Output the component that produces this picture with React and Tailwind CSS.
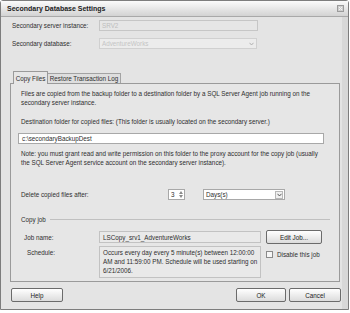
import React from "react";

function Chevron() {
  return (
    <svg width="5" height="4" viewBox="0 0 5 4">
      <path d="M0.5 0.8 L2.5 3 L4.5 0.8" fill="none" stroke="#4a4a4a" strokeWidth="0.9" />
    </svg>
  );
}

function Button({ children, className = "" }) {
  return (
    <div
      className={`h-[14px] flex items-center justify-center rounded-[2px] border border-[#6b6b6b] bg-gradient-to-b from-white to-[#dcdcdc] text-[#222] ${className}`}
    >
      {children}
    </div>
  );
}

export default function App() {
  return (
    <div className="w-[350px] h-[313px] bg-white font-['Liberation_Sans',Arial,sans-serif] text-[6.3px] text-[#2e2e2e] leading-[9px]">
      <div className="w-[349px] h-[310px] border border-[#7d7d7d] rounded-t-[3px] bg-[#e4e4e4] flex flex-col">
        {/* title bar */}
        <div className="h-[16px] flex items-center justify-between pl-[6px] pr-[4px] bg-gradient-to-b from-[#fbfbfb] to-[#d3d3d3] border-b border-[#a9a9a9]">
          <span className="font-bold text-[7px] text-[#1c1c1c]">Secondary Database Settings</span>
          <div className="w-[7px] h-[7px] border border-[#9b9b9b] bg-[#cfcfcf] flex items-center justify-center">
            <svg width="5" height="5" viewBox="0 0 5 5">
              <path d="M1 1 L4 4 M4 1 L1 4" stroke="#f4f4f4" strokeWidth="1" />
            </svg>
          </div>
        </div>

        <div className="flex-1 flex border-r-[6px] border-r-[#d8d8d8]">
          <div className="flex-1 flex flex-col pl-[9px] pr-[2px]">
            {/* server instance */}
            <div className="flex items-center mt-[3px] h-[11px]">
              <span className="w-[89px] pl-[2px]">Secondary server instance:</span>
              <div className="w-[159px] h-[11px] border border-[#c6c6c6] bg-[#e6e6e6] pl-[2px] flex items-center text-[#bdbdbd]">
                SRV2
              </div>
            </div>
            <div className="flex items-center mt-[7px] h-[11px]">
              <span className="w-[89px] pl-[2px]">Secondary database:</span>
              <div className="w-[158px] h-[11px] border border-[#d0d0d0] bg-[#ececec] pl-[2px] flex items-center justify-between text-[#c4c4c4]">
                AdventureWorks
                <div className="w-[9px] h-[9px] flex items-center justify-center opacity-40">
                  <Chevron />
                </div>
              </div>
            </div>

            {/* tabs */}
            <div className="flex items-end mt-[21px] pl-[3px] h-[13px]">
              <div className="h-[13px] w-[35px] flex items-center justify-center border border-b-0 border-[#9a9a9a] bg-[#e6e6e6] rounded-t-[1px] relative top-[1px]">
                Copy Files
              </div>
              <div className="h-[10px] w-[73px] flex items-center justify-center border border-b-0 border-l-0 border-[#a3a3a3] bg-[#dedede]">
                Restore Transaction Log
              </div>
            </div>

            {/* panel */}
            <div className="w-[330px] h-[199px] border border-[#9a9a9a] bg-[#e6e6e6] flex flex-col pl-[10px] pr-[15px] pt-[5px]">
              <p>
                Files are copied from the backup folder to a destination folder by a SQL Server Agent job running on the
                secondary server instance.
              </p>
              <p className="mt-[10px]">
                Destination folder for copied files: (This folder is usually located on the secondary server.)
              </p>
              <div className="mt-[7px] -ml-[3px] w-[306px] h-[11px] border border-[#a8a8a8] bg-white pl-[3px] flex items-center">
                c:\secondaryBackupDest
              </div>
              <p className="mt-[6px] leading-[8.5px]">
                Note: you must grant read and write permission on this folder to the proxy account for the copy job (usually the
                SQL Server Agent service account on the secondary server instance).
              </p>

              <div className="flex items-center mt-[22px] h-[11px]">
                <span className="w-[147px]">Delete copied files after:</span>
                <div className="w-[17px] h-[11px] border border-[#a8a8a8] bg-white flex items-center justify-between pl-[2px] pr-[1px]">
                  3
                  <div className="flex flex-col gap-[1px]">
                    <svg width="4" height="3" viewBox="0 0 4 3"><path d="M0 3 L2 0 L4 3 Z" fill="#8a8a8a" /></svg>
                    <svg width="4" height="3" viewBox="0 0 4 3"><path d="M0 0 L2 3 L4 0 Z" fill="#8a8a8a" /></svg>
                  </div>
                </div>
                <div className="ml-[18px] w-[82px] h-[11px] border border-[#a8a8a8] bg-white flex items-center justify-between pl-[2px] pr-[1px]">
                  Days(s)
                  <div className="w-[8px] h-[8px] border border-[#b8b8b8] bg-[#f0f0f0] flex items-center justify-center">
                    <Chevron />
                  </div>
                </div>
              </div>

              {/* copy job group */}
              <div className="flex items-center mt-[15px] h-[9px]">
                <span>Copy job</span>
                <div className="flex-1 h-px bg-[#c0c0c0] ml-[4px] -mr-[6px]" />
              </div>

              <div className="flex items-center mt-[7px] h-[12px]">
                <span className="w-[78px] pl-[3px]">Job name:</span>
                <div className="w-[162px] h-[12px] border border-[#c2c2c2] bg-[#e9e9e9] pl-[3px] flex items-center">
                  LSCopy_srv1_AdventureWorks
                </div>
                <Button className="ml-[5px] w-[56px]">Edit Job...</Button>
              </div>

              <div className="flex mt-[3px]">
                <span className="w-[78px] pl-[6px] pt-[2px]">Schedule:</span>
                <div className="w-[162px] h-[32px] border border-[#c2c2c2] bg-[#e9e9e9] pl-[3px] pt-[1px] leading-[9px]">
                  Occurs every day every 5 minute(s) between 12:00:00 AM and 11:59:00 PM. Schedule will be used starting on
                  6/21/2006.
                </div>
                <div className="ml-[5px] flex items-start pt-[5px]">
                  <div className="w-[7px] h-[7px] border border-[#8a8a8a] bg-[#f6f6f6]" />
                  <span className="ml-[4px] -mt-[1px]">Disable this job</span>
                </div>
              </div>
            </div>

            {/* buttons */}
            <div className="flex items-center mt-[6px] pl-[1px] w-[331px]">
              <Button className="w-[52px]">Help</Button>
              <div className="flex-1" />
              <Button className="w-[50px]">OK</Button>
              <Button className="w-[52px] ml-[3px]">Cancel</Button>
            </div>
          </div>
        </div>
      </div>
    </div>
  );
}
